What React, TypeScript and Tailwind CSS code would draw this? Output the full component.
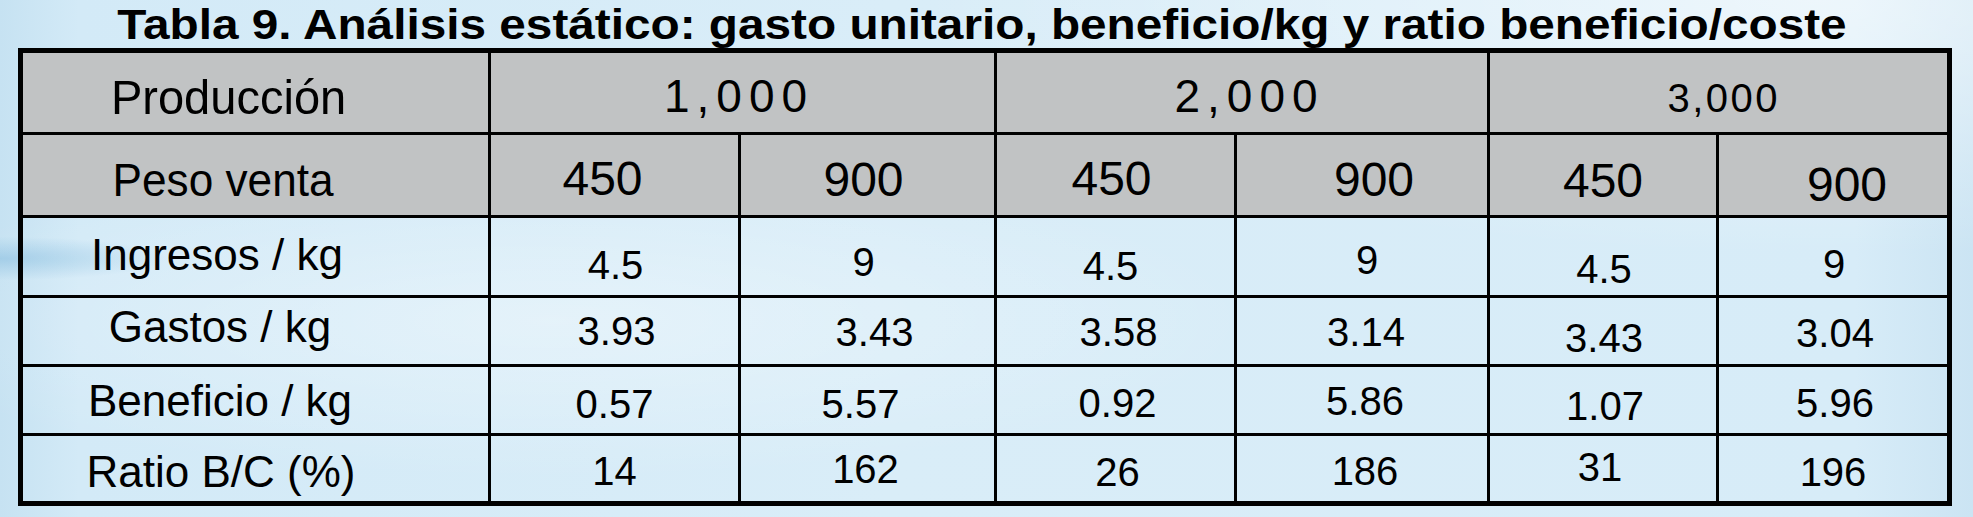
import React from "react";
import clsx from "clsx";

type C = { t: string; cls: string };

const labels: C[] = [
  { t: "Ingresos / kg", cls: "text-[44px] -translate-x-[4px] -translate-y-[2px]" },
  { t: "Gastos / kg", cls: "text-[44px] -translate-x-[1px] -translate-y-[4px]" },
  { t: "Beneficio / kg", cls: "text-[44px] -translate-x-[1px] translate-y-[1px]" },
  { t: "Ratio B/C (%)", cls: "text-[44px] translate-y-[3px]" },
];

const peso: C[] = [
  { t: "450", cls: "-translate-x-[12px] translate-y-[4px]" },
  { t: "900", cls: "-translate-x-[4px] translate-y-[5px]" },
  { t: "450", cls: "-translate-x-[4px] translate-y-[4px]" },
  { t: "900", cls: "translate-x-[12px] translate-y-[5px]" },
  { t: "450", cls: "translate-y-[6px]" },
  { t: "900", cls: "translate-x-[14px] translate-y-[10px]" },
];

const body: C[][] = [
  [
    { t: "4.5", cls: "translate-x-[1px] translate-y-[8px]" },
    { t: "9", cls: "-translate-x-[4px] translate-y-[5px]" },
    { t: "4.5", cls: "-translate-x-[5px] translate-y-[9px]" },
    { t: "9", cls: "translate-x-[5px] translate-y-[3px]" },
    { t: "4.5", cls: "translate-x-[1px] translate-y-[12px]" },
    { t: "9", cls: "translate-x-[1px] translate-y-[7px]" },
  ],
  [
    { t: "3.93", cls: "translate-x-[2px]" },
    { t: "3.43", cls: "translate-x-[7px] translate-y-[1px]" },
    { t: "3.58", cls: "translate-x-[3px] translate-y-[1px]" },
    { t: "3.14", cls: "translate-x-[4px] translate-y-[1px]" },
    { t: "3.43", cls: "translate-x-[1px] translate-y-[7px]" },
    { t: "3.04", cls: "translate-x-[2px] translate-y-[2px]" },
  ],
  [
    { t: "0.57", cls: "translate-y-[4px]" },
    { t: "5.57", cls: "-translate-x-[7px] translate-y-[4px]" },
    { t: "0.92", cls: "translate-x-[2px] translate-y-[3px]" },
    { t: "5.86", cls: "translate-x-[3px] translate-y-[1px]" },
    { t: "1.07", cls: "translate-x-[2px] translate-y-[6px]" },
    { t: "5.96", cls: "translate-x-[2px] translate-y-[3px]" },
  ],
  [
    { t: "14", cls: "translate-y-[2px]" },
    { t: "162", cls: "-translate-x-[2px]" },
    { t: "26", cls: "translate-x-[2px] translate-y-[3px]" },
    { t: "186", cls: "translate-x-[3px] translate-y-[2px]" },
    { t: "31", cls: "-translate-x-[3px] -translate-y-[2px]" },
    { t: "196", cls: "translate-y-[3px]" },
  ],
];

function Cell({
  children,
  right = true,
  bottom = true,
  gray = false,
  span2 = false,
  label = false,
}: {
  children: React.ReactNode;
  right?: boolean;
  bottom?: boolean;
  gray?: boolean;
  span2?: boolean;
  label?: boolean;
}) {
  return (
    <div
      className={clsx(
        "flex items-center justify-center border-black overflow-hidden",
        right && "border-r-[3px]",
        bottom && "border-b-[3px]",
        gray && "bg-[#c1c3c4]",
        span2 && "col-span-2",
        label && "pr-[69px]"
      )}
    >
      {children}
    </div>
  );
}

export default function App() {
  return (
    <div className="w-[1973px] h-[517px] overflow-hidden font-['Liberation_Sans',Arial,sans-serif] text-black bg-[radial-gradient(ellipse_at_28%_62%,rgba(255,255,255,0.35),transparent_35%),radial-gradient(ellipse_at_92%_0%,rgba(255,255,255,0.55),transparent_35%),radial-gradient(ellipse_at_0%_50%,rgba(150,198,228,0.8),transparent_6%),linear-gradient(90deg,#c6e2f2_0%,#d3eaf7_4%,#d9edf8_45%,#d7ecf8_94%,#cbe4f3_100%)]">
      <div className="h-[48px] flex justify-center pr-[9px]">
        <span className="inline-block whitespace-nowrap text-[43px] leading-[48px] font-bold scale-x-[1.11]">
          Tabla 9. Análisis estático: gasto unitario, beneficio/kg y ratio beneficio/coste
        </span>
      </div>
      <div className="ml-[18px] w-[1934px] h-[458px] border-[5px] border-black grid grid-cols-[468px_250px_256px_240px_253px_229px_228px] grid-rows-[82px_83px_80px_69px_69px_65px]">
        {/* Row 1 */}
        <Cell gray label>
          <span className="inline-block leading-none text-[49px] scale-x-[0.96] translate-x-[8px] translate-y-[5px]">
            Producción
          </span>
        </Cell>
        <Cell gray span2>
          <span className="inline-block leading-none text-[46px] tracking-[7px] pl-[7px] -translate-x-[7px] translate-y-[3px]">
            1,000
          </span>
        </Cell>
        <Cell gray span2>
          <span className="inline-block leading-none text-[46px] tracking-[7px] pl-[7px] translate-x-[4px] translate-y-[3px]">
            2,000
          </span>
        </Cell>
        <Cell gray span2 right={false}>
          <span className="inline-block leading-none text-[40px] tracking-[2.5px] pl-[2.5px] translate-x-[4px] translate-y-[5px]">
            3,000
          </span>
        </Cell>

        {/* Row 2 */}
        <Cell gray label>
          <span className="inline-block leading-none text-[46px] scale-x-[0.96] translate-x-[2px] translate-y-[5px]">
            Peso venta
          </span>
        </Cell>
        {peso.map((c, i) => (
          <Cell key={i} gray right={i < 5}>
            <span className={clsx("inline-block leading-none text-[48px]", c.cls)}>{c.t}</span>
          </Cell>
        ))}

        {/* Body rows */}
        {body.map((row, r) => (
          <React.Fragment key={r}>
            <Cell label bottom={r < 3}>
              <span className={clsx("inline-block leading-none whitespace-nowrap", labels[r].cls)}>
                {labels[r].t}
              </span>
            </Cell>
            {row.map((c, i) => (
              <Cell key={i} right={i < 5} bottom={r < 3}>
                <span className={clsx("inline-block leading-none text-[40px]", c.cls)}>{c.t}</span>
              </Cell>
            ))}
          </React.Fragment>
        ))}
      </div>
    </div>
  );
}
